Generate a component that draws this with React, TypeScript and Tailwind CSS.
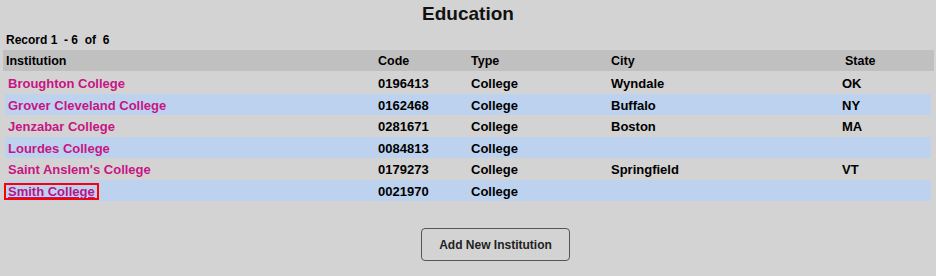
import React from 'react';

interface Institution {
  name: string;
  code: string;
  type: string;
  city: string;
  state: string;
}

const institutions: Institution[] = [
  { name: 'Broughton College', code: '0196413', type: 'College', city: 'Wyndale', state: 'OK' },
  { name: 'Grover Cleveland College', code: '0162468', type: 'College', city: 'Buffalo', state: 'NY' },
  { name: 'Jenzabar College', code: '0281671', type: 'College', city: 'Boston', state: 'MA' },
  { name: 'Lourdes College', code: '0084813', type: 'College', city: '', state: '' },
  { name: "Saint Anslem's College", code: '0179273', type: 'College', city: 'Springfield', state: 'VT' },
  { name: 'Smith College', code: '0021970', type: 'College', city: '', state: '' },
];

export default function App() {
  return (
    <div className="w-[936px] h-[276px] bg-[#d3d3d3] text-black font-['Liberation_Sans',Arial,sans-serif] overflow-hidden">
      <h1 className="h-[28px] pt-[3px] text-center text-[19px] leading-[22px] font-bold text-[#111]">Education</h1>

      <div className="h-[22px] pl-[6px] pt-[4px] text-[12px] leading-[16px] font-bold">
        Record 1 &nbsp;- 6 &nbsp;of &nbsp;6
      </div>

      {/* header */}
      <div className="ml-[3px] mr-[2px] h-[21px] pt-[1px] bg-[#c0c0c0] grid grid-cols-[375px_93px_140px_234px_1fr] items-center text-[12.5px] font-bold">
        <div className="pl-[3px]">Institution</div>
        <div>Code</div>
        <div>Type</div>
        <div>City</div>
        <div>State</div>
      </div>

      <div className="mt-[1px] ml-[5px] mr-[5px]">
        {institutions.map((inst, i) => (
          <div
            key={inst.code}
            className={`h-[21.5px] pt-[2px] grid grid-cols-[373px_93px_140px_231px_1fr] items-center text-[13px] font-bold ${
              i % 2 === 1 ? 'bg-[#bcd2ee]' : ''
            }`}
          >
            <div className="pl-[1px]">
              {inst.name === 'Smith College' ? (
                <a
                  href="#"
                  className="inline-block -ml-[2px] border-2 border-[#ff0000] px-[2px] leading-[13px] text-[#b8128a] underline"
                >
                  {inst.name}
                </a>
              ) : (
                <a href="#" className="pl-[2px] text-[#c71585]">
                  {inst.name}
                </a>
              )}
            </div>
            <div>{inst.code}</div>
            <div>{inst.type}</div>
            <div>{inst.city}</div>
            <div>{inst.state}</div>
          </div>
        ))}
      </div>

      <div className="mt-[27px] flex justify-center">
        <button
          type="button"
          className="w-[149px] h-[33px] ml-[55px] rounded-[4px] border border-[#555] bg-transparent text-[12px] font-bold text-[#222]"
        >
          Add New Institution
        </button>
      </div>
    </div>
  );
}
